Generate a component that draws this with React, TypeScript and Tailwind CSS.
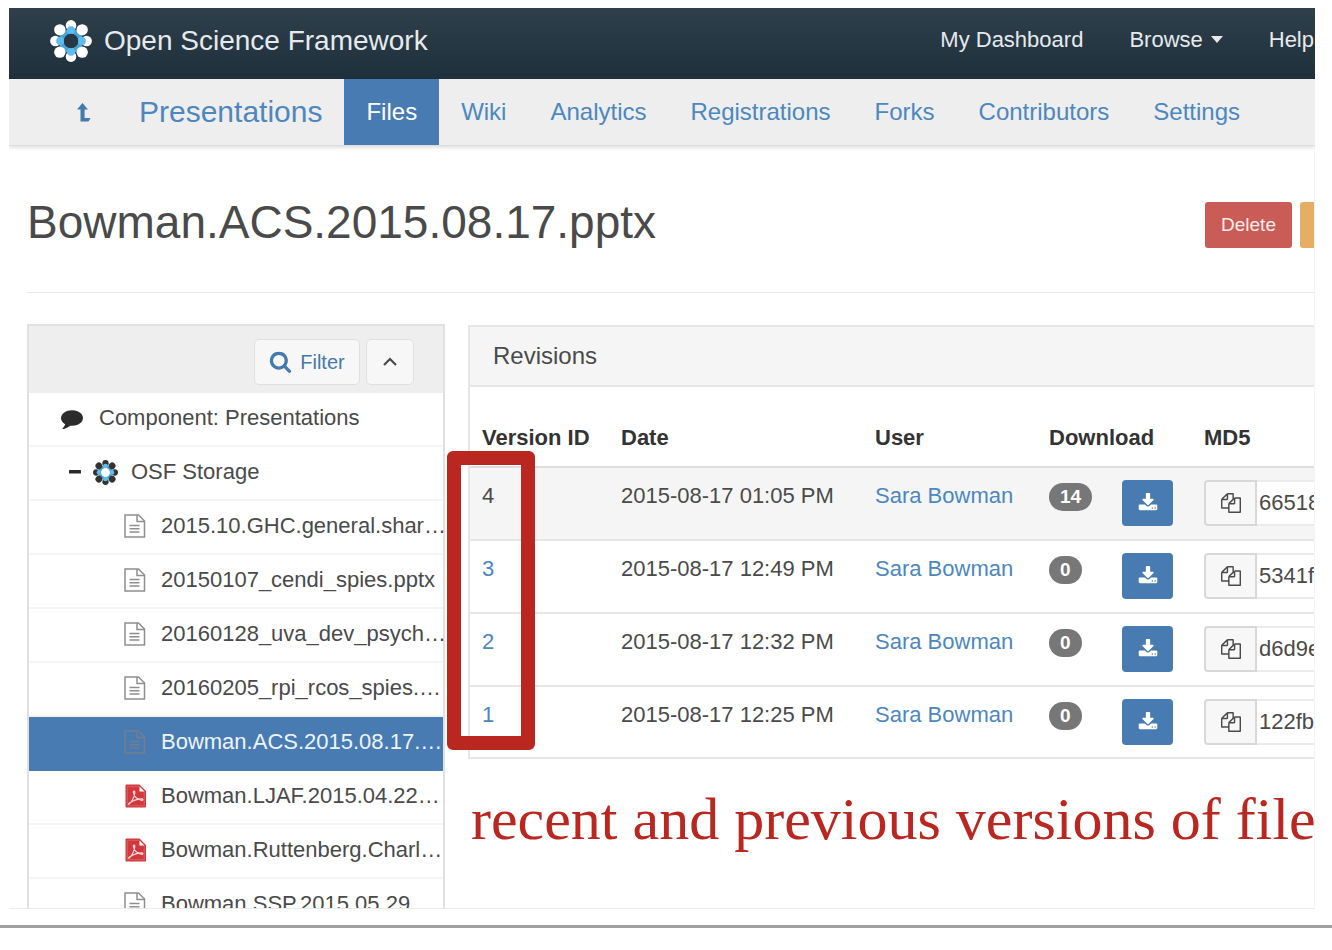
import React from "react";

const CARDINALS = [0, 90, 180, 270];
const DIAGONALS = [45, 135, 225, 315];

function OsfMark({ className, dot, center }: { className: string; dot: string; center: string }) {
  return (
    <svg viewBox="-21 -21 42 42" className={className} aria-hidden="true">
      {CARDINALS.map((a) => (
        <circle key={a} cx="0" cy="-15.6" r="5.3" fill={dot} transform={`rotate(${a})`} />
      ))}
      <circle r="9.6" fill="none" stroke="#4ba3d3" strokeWidth="5" />
      {DIAGONALS.map((a) => (
        <circle key={a} cx="0" cy="-15.8" r="5.7" fill={dot} transform={`rotate(${a})`} />
      ))}
      {CARDINALS.map((a) => (
        <circle key={a} cx="0" cy="-10.8" r="4" fill="#5cbcf0" transform={`rotate(${a})`} />
      ))}
      <circle r="7.2" fill={center} />
    </svg>
  );
}

function Glyph({ d, className }: { d: string; className: string }) {
  return (
    <svg viewBox="0 0 1792 1792" className={className} fill="currentColor" aria-hidden="true">
      <path d={d} />
    </svg>
  );
}

const SEARCH =
  "M1216 832q0-185-131.5-316.5t-316.5-131.5-316.5 131.5-131.5 316.5 131.5 316.5 316.5 131.5 316.5-131.5 131.5-316.5zm512 832q0 52-38 90t-90 38q-54 0-90-38l-343-342q-179 124-399 124-143 0-273.5-55.5t-225-150-150-225-55.5-273.5 55.5-273.5 150-225 225-150 273.5-55.5 273.5 55.5 225 150 150 225 55.5 273.5q0 220-124 399l343 343q37 37 37 90z";
const COMMENT =
  "M1792 896q0 174-120 321.5t-326 233-450 85.5q-70 0-145-8-198 175-460 242-49 14-114 22-17 2-30.5-9t-17.5-29v-1q-3-4-.5-12t2-10 4.5-9.5l6-9 7-8.5 8-9q7-8 31-34.5t34.5-38 31-39.5 32.5-51 27-59 26-76q-157-89-247.5-220t-90.5-281q0-130 71-248.5t191-204.5 286-136.5 348-50.5q244 0 450 85.5t326 233 120 321.5z";
const COPY =
  "M1696 384q40 0 68 28t28 68v1216q0 40-28 68t-68 28h-960q-40 0-68-28t-28-68v-288h-544q-40 0-68-28t-28-68v-672q0-40 20-88t48-76l408-408q28-28 76-48t88-20h416q40 0 68 28t28 68v328q68-40 128-40h416zm-544 213l-299 299h299v-299zm-640-384l-299 299h299v-299zm196 647l316-316v-416h-384v416q0 40-28 68t-68 28h-416v640h512v-256q0-40 20-88t48-76zm956 804v-1152h-384v416q0 40-28 68t-68 28h-416v640h896z";
const DOWNLOAD =
  "M1344 1344q0-26-19-45t-45-19-45 19-19 45 19 45 45 19 45-19 19-45zm256 0q0-26-19-45t-45-19-45 19-19 45 19 45 45 19 45-19 19-45zm128-224v320q0 40-28 68t-68 28h-1472q-40 0-68-28t-28-68v-320q0-40 28-68t68-28h465l135 136q58 56 136 56t136-56l136-136h464q40 0 68 28t28 68zm-325-569q17 41-14 70l-448 448q-18 19-45 19t-45-19l-448-448q-31-29-14-70 17-39 59-39h256v-448q0-26 19-45t45-19h256q26 0 45 19t19 45v448h256q42 0 59 39z";

function DocIcon({ selected }: { selected?: boolean }) {
  return (
    <svg viewBox="0 0 22 24" className="h-6 w-[22px]" fill="none" stroke={selected ? "#6f7f8e" : "#8f8f8f"} strokeWidth="1.5" aria-hidden="true">
      <path d="M1 1h13.5L20.5 7v16H1z" />
      <path d="M13 1v6.500h7.500" />
      <path d="M5.5 11.5h10M5.5 14.8h10M5.5 18h10" />
    </svg>
  );
}

function PdfIcon() {
  return (
    <svg viewBox="0 0 22 24" className="h-6 w-[22px]" aria-hidden="true">
      <path d="M2.5.5h13L22 7v15.5a1 1 0 0 1-1 1H2.5a1 1 0 0 1-1-1v-21a1 1 0 0 1 1-1z" fill="#d2393e" />
      <path d="M3.3 2.3h11.5L20.2 8v13.7H3.3z" fill="none" stroke="#e26a6e" strokeWidth=".7" />
      <path d="M15.500 2.500v5h5z" fill="#fff" />
      <path d="M5 20c2-1 5.500-6.500 5.800-11.500.1-1.900-1.700-1.900-1.400 0 .6 3.600 3.600 7 8.600 7.800 1.300.1 1.200-1.500-.2-1.500-4 0-8.500 1.700-12.300 4.200-1 .8-1.200 1.500-.5 1z" fill="none" stroke="#fbdcdd" strokeWidth="1.200" />
    </svg>
  );
}

const tabs = ["Files", "Wiki", "Analytics", "Registrations", "Forks", "Contributors", "Settings"];

const files = [
  { name: "2015.10.GHC.general.shar…", kind: "doc" },
  { name: "20150107_cendi_spies.pptx", kind: "doc" },
  { name: "20160128_uva_dev_psych…", kind: "doc" },
  { name: "20160205_rpi_rcos_spies.…", kind: "doc" },
  { name: "Bowman.ACS.2015.08.17.…", kind: "doc", selected: true },
  { name: "Bowman.LJAF.2015.04.22…", kind: "pdf" },
  { name: "Bowman.Ruttenberg.Charl…", kind: "pdf" },
];

const revisions = [
  { id: "4", date: "2015-08-17 01:05 PM", downloads: 14, md5: "66518", current: true },
  { id: "3", date: "2015-08-17 12:49 PM", downloads: 0, md5: "5341f" },
  { id: "2", date: "2015-08-17 12:32 PM", downloads: 0, md5: "d6d9e" },
  { id: "1", date: "2015-08-17 12:25 PM", downloads: 0, md5: "122fb" },
];

function Navbar() {
  return (
    <header className="flex h-[71px] items-center bg-linear-to-b from-[#2f3f4c] to-[#1e303c] pr-px pl-[41px] text-[#e6eaed]">
      <a href="#" className="flex items-center gap-3 pb-1.5 text-[28px] leading-9 whitespace-nowrap">
        <OsfMark className="size-[42px]" dot="#ffffff" center="#273743" />
        Open Science Framework
      </a>
      <nav className="ml-auto flex gap-[46px] pb-2 text-[22px] leading-8 whitespace-nowrap">
        <a href="#">My Dashboard</a>
        <a href="#" className="flex items-center gap-2">
          Browse
          <svg viewBox="0 0 12 7" className="h-[7px] w-3" fill="currentColor" aria-hidden="true">
            <path d="M0 0h12L6 7z" />
          </svg>
        </a>
        <a href="#">Help</a>
      </nav>
    </header>
  );
}

function ProjectNav() {
  return (
    <nav className="flex h-[67px] items-stretch border-b border-[#dcdcdc] bg-[#eeeeee] pl-[68px] text-2xl text-[#4d87bf] shadow-[0_2px_4px_rgba(0,0,0,0.12)]">
      <a href="#" aria-label="Parent project" className="flex w-[62px] items-center">
        <svg viewBox="0 0 14 19" className="h-[19px] w-3.5" fill="#4479b0" aria-hidden="true">
          <path d="M5.500 0L11 6.500H7.600V15H13.500L11.500 18.500H3.500V6.500H0z" />
        </svg>
      </a>
      <a href="#" className="flex items-center pr-[22px] text-[30px]">Presentations</a>
      {tabs.map((t) => (
        <a
          key={t}
          href="#"
          className={t === "Files" ? "flex items-center bg-[#487bb2] px-[22px] text-white" : "flex items-center px-[22px]"}
        >
          {t}
        </a>
      ))}
    </nav>
  );
}

function FileTree() {
  return (
    <aside className="w-[418px] shrink-0 border-2 border-b-0 border-[#e0e0e0]">
      <div className="flex h-[67px] items-center justify-end gap-[6px] bg-[#eeeeee] pr-[29px] pt-1">
        <button className="flex h-[46px] w-[106px] items-center justify-center gap-2 rounded-[5px] border border-[#e0e0e0] bg-[#f7f7f7] text-xl text-[#4479b0]">
          <Glyph d={SEARCH} className="size-[23px]" />
          Filter
        </button>
        <button aria-label="Collapse" className="flex h-[46px] w-12 items-center justify-center rounded-[5px] border border-[#e0e0e0] bg-[#f7f7f7]">
          <svg viewBox="0 0 14 9" className="h-[9px] w-3.5" fill="none" stroke="#4a4a4a" strokeWidth="2.200" aria-hidden="true">
            <path d="M1 8l6-6 6 6" />
          </svg>
        </button>
      </div>
      <ul className="text-[22px] leading-8 whitespace-nowrap text-[#4a4a4a]">
        <li className="flex h-[54px] items-start border-b-2 border-[#f4f4f4] pt-[9px] pl-8">
          <span className="flex h-8 w-[38px] shrink-0 items-center text-[#2b2b2b]">
            <Glyph d={COMMENT} className="size-[22px]" />
          </span>
          Component: Presentations
        </li>
        <li className="flex h-[54px] items-start border-b-2 border-[#f4f4f4] pt-[9px] pl-10">
          <button aria-label="Collapse folder" className="flex h-8 w-6 shrink-0 items-center">
            <svg viewBox="0 0 12 4" className="h-1 w-3" aria-hidden="true">
              <rect width="12" height="3.500" rx=".5" fill="#2b2b2b" />
            </svg>
          </button>
          <span className="flex h-8 w-[38px] shrink-0 items-center">
            <OsfMark className="size-[25px]" dot="#333333" center="#ffffff" />
          </span>
          OSF Storage
        </li>
        {files.map((f) => (
          <li
            key={f.name}
            className={
              f.selected
                ? "flex h-[54px] items-start bg-[#487bb2] pt-[9px] pl-[95px] text-[#edf3fa]"
                : "flex h-[54px] items-start border-b-2 border-[#f4f4f4] pt-[9px] pl-[95px]"
            }
          >
            <span className="flex h-8 w-[37px] shrink-0 items-center">
              {f.kind === "pdf" ? <PdfIcon /> : <DocIcon selected={f.selected} />}
            </span>
            {f.name}
          </li>
        ))}
        <li className="flex h-[29px] items-start overflow-hidden pt-[9px] pl-[95px]">
          <span className="flex h-8 w-[37px] shrink-0 items-center">
            <DocIcon />
          </span>
          Bowman.SSP.2015.05.29
        </li>
      </ul>
    </aside>
  );
}

function Revisions() {
  return (
    <section className="relative border-2 border-r-0 border-[#e6e6e6]">
      <h2 className="border-b-2 border-[#e6e6e6] bg-[#f5f5f5] py-3 pl-[23px] text-2xl leading-[34px] text-[#4a4a4a]">Revisions</h2>
      <table className="w-full table-fixed text-left text-[22px] leading-8 whitespace-nowrap text-[#4a4a4a]">
        <colgroup>
          <col className="w-[139px]" />
          <col className="w-[254px]" />
          <col className="w-[174px]" />
          <col className="w-[155px]" />
          <col />
        </colgroup>
        <thead>
          <tr className="border-b-2 border-[#dddddd] text-[#333333]">
            {["Version ID", "Date", "User", "Download", "MD5"].map((h) => (
              <th key={h} scope="col" className="h-[80px] pt-[22px] pl-3 font-bold">
                {h}
              </th>
            ))}
          </tr>
        </thead>
        <tbody>
          {revisions.map((r, i) => (
            <tr
              key={r.id}
              className={
                r.current
                  ? "h-[73px] border-b-2 border-[#e6e6e6] bg-[#f5f5f5] align-top"
                  : i < revisions.length - 1
                    ? "h-[73px] border-b-2 border-[#e6e6e6] align-top"
                    : "h-[71px] align-top"
              }
            >
              <td className="pt-3 pl-3">
                {r.current ? r.id : <a href="#" className="text-[#4d87bf]">{r.id}</a>}
              </td>
              <td className="pt-3 pl-3">{r.date}</td>
              <td className="pt-3 pl-3">
                <a href="#" className="text-[#4d87bf]">Sara Bowman</a>
              </td>
              <td className="pt-3 pr-[19px] pl-3">
                <div className="flex items-start justify-between">
                  <span className="mt-[3px] rounded-full bg-[#777777] px-[11px] text-[19px] leading-7 font-bold text-white">{r.downloads}</span>
                  <button aria-label="Download" className="flex h-[46px] w-[51px] items-center justify-center rounded-[4px] bg-[#487bb2] text-white">
                    <Glyph d={DOWNLOAD} className="size-5" />
                  </button>
                </div>
              </td>
              <td className="pt-3 pl-3">
                <div className="flex h-[46px]">
                  <button aria-label="Copy MD5" className="flex w-[53px] shrink-0 items-center justify-center rounded-l-[4px] border-2 border-[#d8d8d8] bg-[#f7f7f7] text-[#4a4a4a]">
                    <Glyph d={COPY} className="size-5" />
                  </button>
                  <input
                    aria-label="MD5"
                    readOnly
                    defaultValue={r.md5}
                    className="w-0 min-w-0 grow border-y-2 border-[#ebebeb] bg-white pl-[2px] text-[22px] outline-none"
                  />
                </div>
              </td>
            </tr>
          ))}
        </tbody>
      </table>
      <div className="pointer-events-none absolute top-[124px] -left-[23px] h-[299px] w-[88px] rounded-md border-[14px] border-[#b92720]" />
    </section>
  );
}

export default function App() {
  return (
    <div className="bg-white pt-2 font-['Liberation_Sans',Arial,sans-serif]">
      <div className="mr-[17px] ml-[9px] overflow-hidden border-b border-[#ececec]">
        <Navbar />
        <ProjectNav />
        <main className="border-r border-[#f4f4f4] pl-[18px]">
          <div className="flex items-center border-b border-[#e9e9e9] pt-[47px] pb-[41px]">
            <h1 className="text-[46px] leading-[58px] whitespace-nowrap text-[#4a4a4a]">Bowman.ACS.2015.08.17.pptx</h1>
            <div className="ml-auto flex shrink-0 gap-2 pt-1.5">
              <button className="h-[46px] w-[87px] rounded-[3px] bg-[#c95c56] text-[19px] text-[#fbeceb]">Delete</button>
              <button aria-label="View" className="h-[46px] w-[14px] rounded-l-[3px] bg-[#e5ae62]" />
            </div>
          </div>
          <div className="flex gap-[23px] pt-[31px]">
            <FileTree />
            <div className="min-w-0 grow pt-px">
              <Revisions />
              <p className="pt-[26px] pl-[3px] font-['Liberation_Serif',Georgia,serif] text-[60px] leading-[68px] whitespace-nowrap text-[#b92720]">
                recent and previous versions of file
              </p>
            </div>
          </div>
        </main>
      </div>
      <hr className="mt-4 border-t-[3px] border-[#a0a0a0]" />
    </div>
  );
}
